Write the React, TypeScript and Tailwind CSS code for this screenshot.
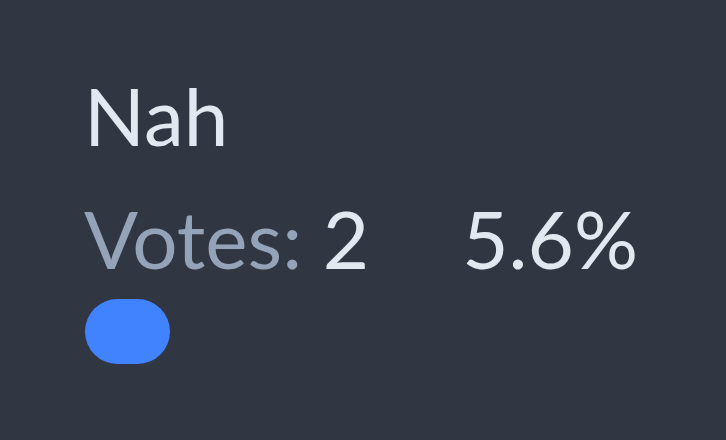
export default function App() {
  const votes = 2;
  const pct = 5.6;

  return (
    <div className="min-h-screen w-full bg-[#313643] pl-[84px] pr-[88px] pt-[59px] pb-[62px] font-['Lato',sans-serif] text-[#e2e8f0]">
      <h2 className="text-[80px] leading-[112px]">Nah</h2>
      <div className="mt-[11px] flex items-baseline justify-between text-[80px] leading-[112px]">
        <span>
          <span className="text-[#94a3b8]">Votes:</span> {votes}
        </span>
        <span>{pct}%</span>
      </div>
      <div className="ml-px mt-[5px] h-[65px] w-[85px] rounded-full bg-[#4182ff]" />
    </div>
  );
}
